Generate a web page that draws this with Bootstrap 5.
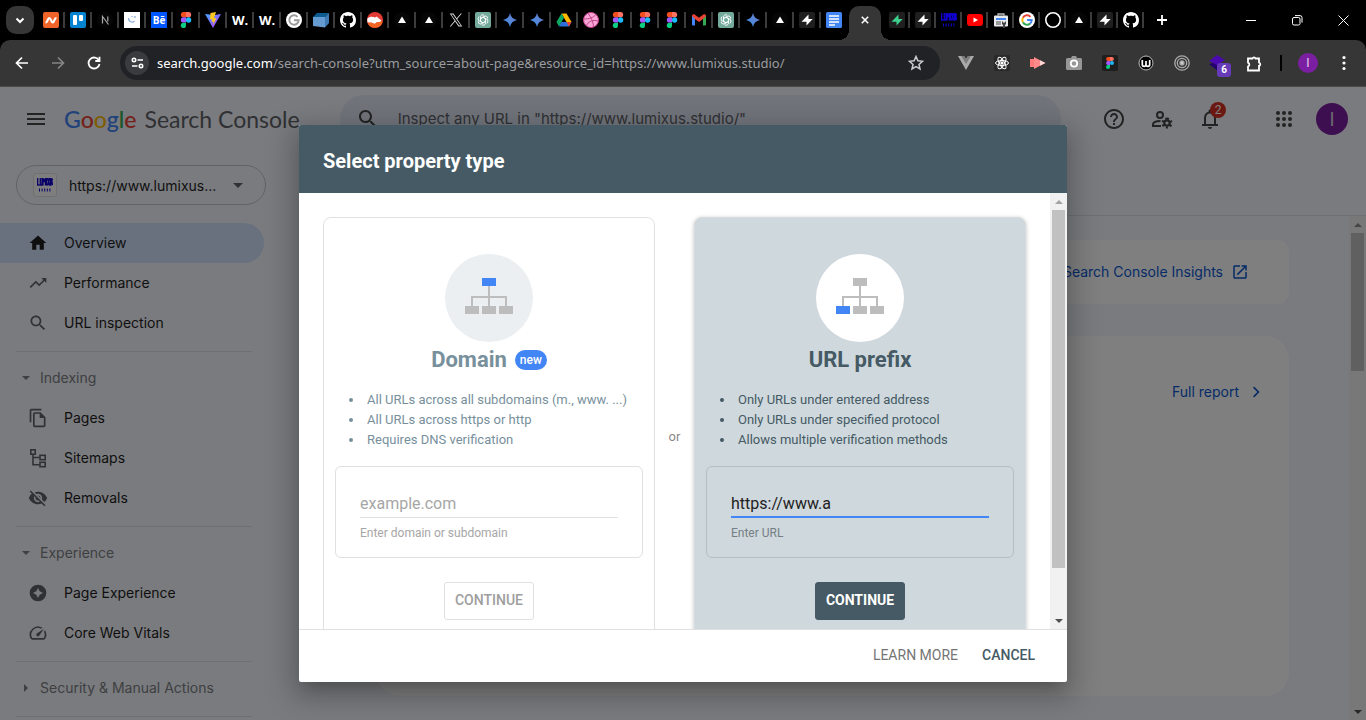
<!DOCTYPE html>
<html lang="en">
<head>
<meta charset="utf-8">
<meta name="viewport" content="width=device-width, initial-scale=1">
<title>Google Search Console</title>
<link href="https://cdn.jsdelivr.net/npm/bootstrap@5.3.0/dist/css/bootstrap.min.css" rel="stylesheet">
<style>
  body { height: 100vh; overflow: hidden; background: #000; font-family: Roboto, sans-serif; font-size: 14px; }
  svg { display: block; flex: none; }
  button { font-family: inherit; }
  .plain { border: 0; background: none; padding: 0; color: inherit; display: flex; align-items: center; justify-content: center; flex: none; }

  /* tab strip */
  .tabstrip { height: 40px; padding-left: 6px; color: #fff; }
  .tab-search { width: 28px; height: 28px; border-radius: 10px; background: #363636; margin-right: 4px; }
  .tab-item { width: 27px; height: 16px; border-right: 2px solid #3c3c3c; padding: 0 4px 0 5px; justify-content: flex-start; }
  .tab-item.last-left { border-color: transparent; }
  .tabs-right .tab-item { width: 26px; padding-right: 3px; }
  .tab-current { position: relative; width: 32px; height: 34px; align-self: flex-end; border-radius: 10px 10px 0 0; background: #363636; margin: 0 3px 0 1px; padding-bottom: 6px; }
  .tab-current::before, .tab-current::after { content: ""; position: absolute; bottom: 0; width: 10px; height: 10px; }
  .tab-current::before { left: -10px; background: radial-gradient(circle at 0 0, transparent 10px, #363636 10px); }
  .tab-current::after { right: -10px; background: radial-gradient(circle at 100% 0, transparent 10px, #363636 10px); }
  .word-icon { font: 700 13px/16px "Open Sans", sans-serif; width: 16px; }
  .be-icon { font: 700 10px/16px "Open Sans", sans-serif; width: 16px; height: 16px; background: #0057ff; text-align: center; }
  .win-btn { width: 46px; height: 40px; }

  /* toolbar */
  .toolbar { height: 47px; background: #363636; border-radius: 10px 10px 0 0; border-bottom: 1px solid #4a4a4a; color: #fff; padding-left: 4px; padding-right: 4px; }
  .tool-btn { width: 36px; height: 34px; }
  .omnibox { height: 34px; border-radius: 17px; background: #202226; margin-left: 8px; margin-right: 8px; padding: 0 16px 0 5px; min-width: 0; }
  .site-info { width: 24px; height: 24px; border-radius: 50%; background: #3a3b3e; }
  .address { font: 13px/20px "Noto Sans", sans-serif; color: #9b9c9e; margin-left: 8px; }
  .address b { font-weight: 400; color: #fff; }
  .ext { width: 36px; height: 34px; position: relative; }
  .ext-count { position: absolute; left: 17px; top: 17px; width: 14px; height: 14px; border-radius: 3px; background: #673ab7; font: 700 10px/14px Roboto, sans-serif; }
  .tool-line { width: 2px; height: 16px; background: #000; margin: 0 8px; }
  .avatar-s { width: 20px; height: 20px; border-radius: 50%; background: #7b1fa2; color: #e8d2f0; font-size: 12px; }

  /* search console page */
  .app { background: #f4f6fc; font-family: Inter, sans-serif; color: #1f1f1f; }
  .appbar { height: 64px; padding: 0 18px 0 24px; color: #444746; }
  .logo-g { font: 500 23px/32px Lato, sans-serif; }
  .logo-g .product { font-weight: 400; color: #5f6368; margin-left: 8px; }
  .inspect { width: 721px; height: 48px; border-radius: 24px; background: #e3e9f7; margin-left: 40px; padding-left: 16px; }
  .inspect input { background: none; border: 0; box-shadow: none; outline: 0; font-size: 15px; padding: 0; margin-left: 18px; flex: 1; }
  .inspect input::placeholder { color: #5f6368; }
  .appbar .plain { width: 48px; height: 48px; position: relative; }
  .appbar .apps { margin-left: 26px; }
  .alert-count { position: absolute; left: 24px; top: 7px; width: 16px; height: 16px; border-radius: 50%; background: #d93025; color: #fff; font: 12px/16px Roboto, sans-serif; }
  .avatar-l { width: 32px; height: 32px; border-radius: 50%; background: #7b1fa2; color: #d8d8d8; font: 20px/32px "Open Sans", sans-serif; }

  .sidebar { width: 304px; flex: none; }
  .property { width: 250px; height: 40px; border: 1px solid #c4c7c5; border-radius: 20px; margin: 14px 0 18px 16px; padding: 0 22px 0 16px; justify-content: flex-start; font-size: 14px; }
  .prop-icon { width: 24px; height: 24px; border: 1px solid #e0e0e0; border-radius: 3px; background: #fcfcff; margin-right: 12px; }
  .side-link { height: 40px; width: 264px; padding-left: 28px; gap: 16px; color: #1f1f1f; display: flex; align-items: center; border-radius: 0 20px 20px 0; text-decoration: none; line-height: 20px; }
  .side-link svg { fill: #5f6368; }
  .side-link.active { background: #d3e3fd; }
  .side-link.active svg { fill: #1f1f1f; }
  .side-line { width: 236px; height: 1px; margin: 8px 0 6px 16px; background: #dcdfdf; }
  .side-head { height: 40px; padding-left: 22px; gap: 10px; color: #7c8085; justify-content: flex-start; line-height: 20px; }
  .pane { margin-top: 64px; border-top: 1px solid #dfe1e5; overflow: hidden; min-width: 0; }
  .panel { background: #fff; margin-left: 72px; margin-right: 60px; color: #0b57d0; font-weight: 500; }
  .panel a { color: #0b57d0; text-decoration: none; display: flex; align-items: center; justify-content: flex-end; line-height: 20px; }
  .insights { height: 64px; margin-top: 24px; border-radius: 12px; padding-right: 40px; font-weight: 400; }
  .report { height: 360px; margin-top: 32px; border-radius: 24px; padding: 46px 22px 0 0; font-weight: 400; }

  /* drawn scroll bars */
  .bar { width: 17px; flex: none; background: #f1f1f1; display: flex; flex-direction: column; align-items: center; justify-content: space-between; }
  .bar-thumb { width: 13px; background: #c1c1c1; }
  .bar-arrow { height: 17px; display: flex; align-items: center; }

  /* dialog */
  .dim { background: rgba(0,0,0,.5); font-family: Roboto, sans-serif; }
  .dialog { width: 768px; height: calc(100% - 76px); border: 0; border-radius: 2px; background: #fff; box-shadow: 0 11px 15px -7px rgba(0,0,0,.2), 0 9px 28px 8px rgba(0,0,0,.22); overflow: hidden; }
  .dialog-top { height: 68px; background: #455a64; color: #fff; padding: 4px 24px 0; font-size: 20px; line-height: 24px; font-weight: 700; flex: none; }
  .dialog-top h1 { font: inherit; margin: 0; }
  .choices { display: grid; grid-template-columns: 1fr 39px 1fr; padding: 24px 24px 0; overflow: hidden; min-height: 0; }
  .choice { height: 440px; border: 1px solid #e0e0e0; border-radius: 8px; padding: 36px 11px 0; color: #78909c; display: flex; flex-direction: column; align-items: center; background: #fff; }
  .choice.on { border-color: #d6dcdf; background: #cfd8dd; color: #455a64; box-shadow: 0 1px 4px rgba(0,0,0,.25); }
  .disc { width: 88px; height: 88px; border-radius: 50%; background: #eceff1; }
  .on .disc { background: #fff; }
  .choice h2 { font-size: 22px; line-height: 36px; font-weight: 700; margin: 0; }
  .new-pill { background: #4285f4; font-size: 12px; line-height: 20px; height: 20px; border-radius: 10px; padding: 0 5px; font-weight: 500; }
  .choice ul { align-self: stretch; margin: 12px 0 16px; padding-left: 29px; font-size: 13px; line-height: 20px; }
  .choice li { padding-left: 3px; }
  .entry { align-self: stretch; height: 92px; border: 1px solid #e0e0e0; border-radius: 6px; padding: 23px 24px 0; }
  .on .entry { border-color: #b5bfc2; }
  .entry input { border: 0; border-bottom: 1px solid #e0e0e0; border-radius: 0; height: 28px; padding: 0; font-size: 16px; color: #212121; background: none; box-shadow: none; }
  .entry input::placeholder { color: #a6a6a6; }
  .on .entry input { border-bottom: 2px solid #4285f4; background: none; box-shadow: none; }
  .entry label { font-size: 12px; line-height: 16px; margin-top: 7px; color: #a6a6a6; display: block; }
  .on .entry label { color: #757f84; }
  .go { width: 90px; height: 38px; padding: 0 0 2px; margin-top: 24px; border-radius: 3px; font-size: 14px; font-weight: 500; border: 1px solid #e0e0e0; color: #9e9e9e; background: #fff; }
  .on .go { background: #455a64; border-color: #455a64; color: #fff; font-weight: 700; }
  .or-word { font-size: 13px; color: #8a8a8a; padding-top: 210px; text-align: center; }
  .dialog-end { height: 53px; border-top: 1px solid #e0e0e0; padding: 0 32px 2px 0; gap: 24px; flex: none; }
  .dialog-end .btn { padding: 0; border: 0; font-size: 14px; line-height: 20px; color: #757575; }
  .dialog-end .btn.strong { color: #455a64; font-weight: 500; }
</style>
</head>
<body class="d-flex flex-column">

<svg width="0" height="0" class="position-absolute" aria-hidden="true">
  <defs>
    <linearGradient id="gem" x1="0" y1="1" x2="1" y2="0"><stop offset="0" stop-color="#2a8fe8"/><stop offset=".5" stop-color="#5a86d8"/><stop offset="1" stop-color="#5a78c8"/></linearGradient>
    <linearGradient id="vg" x1="0" y1="0" x2="1" y2="1"><stop offset="0" stop-color="#41a9ff"/><stop offset="1" stop-color="#bd34fe"/></linearGradient>
    <symbol id="figma" viewBox="0 0 16 16"><path fill="#f24e1e" d="M8 0H5.500a2.650 2.650 0 0 0 0 5.300H8z"/><path fill="#ff7262" d="M8 0h2.500a2.650 2.650 0 0 1 0 5.300H8z"/><path fill="#a259ff" d="M8 5.300H5.500a2.650 2.650 0 0 0 0 5.300H8z"/><circle cx="10.600" cy="8" r="2.650" fill="#1abcfe"/><path fill="#0acf83" d="M8 10.700H5.500A2.650 2.650 0 1 0 8 13.400z"/></symbol>
    <symbol id="tri" viewBox="0 0 16 16"><circle cx="8" cy="8" r="8" fill="#060606"/><path fill="#fff" d="M8 4.500l4 6.500H4z"/></symbol>
    <symbol id="gpt" viewBox="0 0 16 16"><rect width="16" height="16" rx="2" fill="#74aa9c"/><g fill="none" stroke="#fff" stroke-width=".9"><path d="M8 5.300l2.500 1.400v4.500a2.300 2.300 0 0 1-3.600 1.600"/><path d="M8 5.300l2.500 1.400v4.500a2.300 2.300 0 0 1-3.600 1.600" transform="rotate(60 8 8)"/><path d="M8 5.300l2.500 1.400v4.500a2.300 2.300 0 0 1-3.600 1.600" transform="rotate(120 8 8)"/><path d="M8 5.300l2.500 1.400v4.500a2.300 2.300 0 0 1-3.600 1.600" transform="rotate(180 8 8)"/><path d="M8 5.300l2.500 1.400v4.500a2.300 2.300 0 0 1-3.600 1.600" transform="rotate(240 8 8)"/><path d="M8 5.300l2.500 1.400v4.500a2.300 2.300 0 0 1-3.600 1.600" transform="rotate(300 8 8)"/></g></symbol>
    <symbol id="spark" viewBox="0 0 16 16"><path fill="url(#gem)" d="M8 1C8.900 5 11 7.100 15 8 11 8.900 8.900 11 8 15 7.100 11 5 8.900 1 8 5 7.100 7.100 5 8 1z"/></symbol>
    <symbol id="bolt" viewBox="0 0 16 16"><rect width="16" height="16" rx="2" fill="#1f1f1f"/><path fill="currentColor" d="M9.500 2.500v4.500h4.200L7.500 13.500V9.800H2.500z"/></symbol>
    <symbol id="git" viewBox="0 0 16 16"><path fill="#fff" d="M8 0C3.580 0 0 3.580 0 8c0 3.540 2.290 6.530 5.470 7.590.4.070.55-.17.55-.38 0-.19-.01-.82-.01-1.490-2.010.37-2.530-.49-2.690-.94-.09-.23-.48-.94-.82-1.130-.28-.15-.68-.52-.01-.53.63-.01 1.080.58 1.230.82.72 1.210 1.870.87 2.330.66.07-.52.28-.87.51-1.070-1.780-.2-3.640-.89-3.640-3.950 0-.87.31-1.590.82-2.150-.08-.2-.36-1.020.08-2.120 0 0 .67-.21 2.200.82.64-.18 1.320-.27 2-.27s1.360.09 2 .27c1.530-1.040 2.200-.82 2.200-.82.44 1.100.16 1.920.08 2.120.51.56.82 1.270.82 2.150 0 3.070-1.870 3.750-3.650 3.950.29.25.54.73.54 1.480 0 1.070-.01 1.930-.01 2.200 0 .21.15.46.55.38A8.010 8.010 0 0 0 16 8c0-4.420-3.580-8-8-8z"/></symbol>
    <symbol id="lumi" viewBox="0 0 16 16"><g fill="none" stroke="#1000d0" stroke-width="1.300"><path d="M.7 1v7H2.500M3.300 1v7H5V1M6 8.500V1.200L7.200 4 8.400 1.200V8.500M9.500 1v7.500M10.500 1l2 7.500M12.500 1l-2 7.500M13.300 1v7H14V1M15.500 1.500L14.800 4l.8 4"/><path stroke-width="3" stroke-dasharray="1 1.600" d="M2 13h13"/></g></symbol>
    <symbol id="mag" viewBox="0 0 24 24"><path d="M15.500 14h-.79l-.28-.27C15.410 12.590 16 11.110 16 9.500 16 5.910 13.090 3 9.500 3S3 5.910 3 9.500 5.910 16 9.500 16c1.610 0 3.090-.59 4.230-1.570l.27.28v.79l5 4.990L20.490 19l-4.990-5zm-6 0C7.010 14 5 11.990 5 9.500S7.010 5 9.500 5 14 7.010 14 9.500 11.990 14 9.500 14z"/></symbol>
  </defs>
</svg>

<header class="tabstrip d-flex align-items-center flex-shrink-0">
  <button class="plain tab-search" aria-label="Search tabs"><svg width="10" height="10" fill="none" stroke="#fff" stroke-width="2"><path d="M1.500 3.500L5 7l3.500-3.500"/></svg></button>
  <button class="plain tab-item" aria-label="Namecheap"><svg width="16" height="16"><rect width="16" height="16" rx="2" fill="#f0642a"/><path d="M2.500 10.500C5 10.500 4.500 6 6.200 6s2 4.500 3.600 4.500 1.200-4.500 3.700-4.500" fill="none" stroke="#fff" stroke-width="2.200"/></svg></button>
  <button class="plain tab-item" aria-label="Trello"><svg width="16" height="16"><rect width="16" height="16" rx="2" fill="#0284d0"/><rect x="3" y="3" width="4" height="10" rx="1" fill="#fff"/><rect x="9" y="3" width="4" height="6" rx="1" fill="#fff"/></svg></button>
  <button class="plain tab-item" aria-label="Next.js"><svg width="16" height="16" fill="none" stroke="#aaa" stroke-width="1.200"><circle cx="8" cy="8" r="8" fill="#060606" stroke="none"/><path d="M5.500 11.500V4.500l6 8M10.800 4.500v5"/></svg></button>
  <button class="plain tab-item" aria-label="Design"><svg width="16" height="16"><path fill="#fff" d="M0 0h16v16H0z"/><path d="M4.500 6c0 4 4 5 6 3M8 4v1M11 4v2" fill="none" stroke="#8fb2dd" stroke-width="1.300"/></svg></button>
  <button class="plain tab-item" aria-label="Behance"><span class="be-icon">Bē</span></button>
  <button class="plain tab-item" aria-label="Figma"><svg width="16" height="16"><use href="#figma"/></svg></button>
  <button class="plain tab-item" aria-label="Vite"><svg width="16" height="16"><path fill="url(#vg)" d="M0 2l8 14 8-14-6 1z"/><path fill="#ffc81e" d="M11 0L5.500 1 5 7.500l2.200-.4L6.500 10l2-.5-.5 3.500L11.500 6 9 6.300z"/></svg></button>
  <button class="plain tab-item"><span class="word-icon">W.</span></button>
  <button class="plain tab-item"><span class="word-icon">W.</span></button>
  <button class="plain tab-item" aria-label="G"><svg width="16" height="16"><circle cx="8" cy="8" r="8" fill="#fff"/><path d="M11.500 4.800A4.700 4.700 0 1 0 12.700 8.300H8" fill="none" stroke="#999" stroke-width="1.900"/></svg></button>
  <button class="plain tab-item" aria-label="Box"><svg width="16" height="16"><path fill="#0d5b93" d="M4 1h12l-4 4H0z"/><path fill="#659bd0" d="M0 5h12v10.500L0 14z"/><path fill="#3f7ab5" d="M12 5l4-4v10l-4 4.500z"/></svg></button>
  <button class="plain tab-item" aria-label="GitHub"><svg width="16" height="16"><use href="#git"/></svg></button>
  <button class="plain tab-item" aria-label="Bear"><svg width="16" height="16"><circle cx="8" cy="8" r="8" fill="#e33b35"/><path fill="#fff" d="M.3 6.800C3 4 6 4.500 8 5.500l2-1 1 1.300 3.500 2.700-.8 1.300-3.700.4L7.500 12 5 10.800.4 10.500z"/><path fill="#f26522" d="M.4 10.500L5 10.800l2.500 1.200 2.500-1.800 3.700-.4 2-.3A8 8 0 0 1 .4 10.500z"/></svg></button>
  <button class="plain tab-item" aria-label="Vercel"><svg width="16" height="16"><use href="#tri"/></svg></button>
  <button class="plain tab-item" aria-label="Vercel"><svg width="16" height="16"><use href="#tri"/></svg></button>
  <button class="plain tab-item" aria-label="X"><svg width="16" height="16" viewBox="-3 -3 30 30" fill="#ddd"><path d="M14.230 10.160L22.980 0h-2.070l-7.600 8.820L7.240 0H.24l9.170 13.340L.24 24h2.080l8.010-9.320L16.730 24h7zm-2.840 3.300l-.93-1.330L3.070 1.560h3.180l5.970 8.530.92 1.330 7.760 11.090h-3.180z"/></svg></button>
  <button class="plain tab-item" aria-label="ChatGPT"><svg width="16" height="16"><use href="#gpt"/></svg></button>
  <button class="plain tab-item" aria-label="Gemini"><svg width="16" height="16"><use href="#spark"/></svg></button>
  <button class="plain tab-item" aria-label="Gemini"><svg width="16" height="16"><use href="#spark"/></svg></button>
  <button class="plain tab-item" aria-label="Drive"><svg width="16" height="16"><path fill="#ffba00" d="M5.500 1.500h5L15.500 10h-5z"/><path fill="#0da960" d="M5.500 1.500L8 5.800 3 14.500.5 10z"/><path fill="#2d6fdd" d="M5.500 10h10L13 14.500H3z"/><path fill="#ea4335" d="M10.500 10h5L13 14.500z"/></svg></button>
  <button class="plain tab-item" aria-label="Dribbble"><svg width="16" height="16" fill="none" stroke="#c2418a" stroke-width="1"><circle cx="8" cy="8" r="7.500" fill="#f8a5d6"/><path d="M5 1.500C8 5 10 9 10.700 15M1 7c5 0 9-1 12-4.500M3.500 13.500C5.500 9 10 7.500 15.300 9"/></svg></button>
  <button class="plain tab-item" aria-label="Figma"><svg width="16" height="16"><use href="#figma"/></svg></button>
  <button class="plain tab-item" aria-label="Figma"><svg width="16" height="16"><use href="#figma"/></svg></button>
  <button class="plain tab-item" aria-label="Figma"><svg width="16" height="16"><use href="#figma"/></svg></button>
  <button class="plain tab-item" aria-label="Gmail"><svg width="16" height="16"><path fill="#4285f4" d="M1 4h3v9.500H2a1 1 0 0 1-1-1z"/><path fill="#34a853" d="M12 4h3v8.500a1 1 0 0 1-1 1h-2z"/><path fill="#ea4335" d="M1 4c0-1.500 1.800-2.200 3-1.200l4 3 4-3c1.200-1 3-.3 3 1.200L12 7 8 10 4 7z"/></svg></button>
  <button class="plain tab-item" aria-label="ChatGPT"><svg width="16" height="16"><use href="#gpt"/></svg></button>
  <button class="plain tab-item" aria-label="Gemini"><svg width="16" height="16"><use href="#spark"/></svg></button>
  <button class="plain tab-item" aria-label="Vercel"><svg width="16" height="16"><use href="#tri"/></svg></button>
  <button class="plain tab-item" aria-label="Bolt"><svg width="16" height="16"><use href="#bolt"/></svg></button>
  <button class="plain tab-item last-left" aria-label="Docs"><svg width="16" height="16"><rect width="16" height="16" rx="1.500" fill="#4285f4"/><path d="M3 4h10M3 7h10M3 10h10M3 13h6" stroke="#fff" stroke-width="1.500"/></svg></button>
  <button class="plain tab-current" aria-label="Close tab"><svg width="8" height="8" stroke="#fff" stroke-width="1.600"><path d="M.8.8l6.400 6.400M7.200.8L.8 7.200"/></svg></button>
  <div class="tabs-right d-flex">
    <button class="plain tab-item" aria-label="Supabase" style="color:#3ecf8e"><svg width="16" height="16"><use href="#bolt"/></svg></button>
    <button class="plain tab-item" aria-label="Bolt"><svg width="16" height="16"><use href="#bolt"/></svg></button>
    <button class="plain tab-item" aria-label="Lumixus"><svg width="16" height="16"><use href="#lumi"/></svg></button>
    <button class="plain tab-item" aria-label="YouTube"><svg width="16" height="16"><rect y="2" width="16" height="12" rx="3" fill="#f00"/><path fill="#fff" d="M6.500 5.500L11 8l-4.500 2.500z"/></svg></button>
    <button class="plain tab-item" aria-label="Search Console"><svg width="16" height="16"><path d="M5 3.500V2h6v1.500" fill="none" stroke="#bbb" stroke-width="1.300"/><rect x="1" y="3.500" width="14" height="11" rx="1" fill="#e8eaed"/><path fill="#4285f4" d="M3 6h10v2H3z"/><path fill="#999" d="M3 9h5v4H3z"/><path fill="#444" d="M9 9l2 2 2-2v3l-1 1v3h-2v-3l-1-1z"/></svg></button>
    <button class="plain tab-item" aria-label="Google"><svg width="16" height="16" fill="none" stroke-width="2"><circle cx="8" cy="8" r="8" fill="#fff"/><path stroke="#ea4335" d="M3.900 5.700A4.700 4.700 0 0 1 11.500 4.800"/><path stroke="#fbbc05" d="M3.900 5.700A4.700 4.700 0 0 0 3.900 10.300"/><path stroke="#34a853" d="M3.900 10.300A4.700 4.700 0 0 0 11.200 11.500"/><path stroke="#4285f4" d="M11.200 11.500A4.700 4.700 0 0 0 12.700 8H8"/></svg></button>
    <button class="plain tab-item" aria-label="Circle"><svg width="16" height="16"><circle cx="8" cy="8" r="7.200" fill="none" stroke="#fff" stroke-width="1.600"/></svg></button>
    <button class="plain tab-item" aria-label="Vercel"><svg width="16" height="16"><use href="#tri"/></svg></button>
    <button class="plain tab-item" aria-label="Bolt"><svg width="16" height="16"><use href="#bolt"/></svg></button>
    <button class="plain tab-item" aria-label="GitHub"><svg width="16" height="16"><use href="#git"/></svg></button>
  </div>
  <button class="plain ms-2 ps-1" aria-label="New tab"><svg width="12" height="12" stroke="#fff" stroke-width="1.800"><path d="M6 1v10M1 6h10"/></svg></button>
  <div class="d-flex ms-auto">
    <button class="plain win-btn" aria-label="Minimise"><svg width="10" height="10" stroke="#fff"><path d="M0 5.500h10"/></svg></button>
    <button class="plain win-btn" aria-label="Restore"><svg width="11" height="11" fill="none" stroke="#fff"><rect x=".5" y="2.500" width="7.500" height="7.500" rx="1.500"/><path d="M3 .6h5A2 2 0 0 1 10 2.600v5"/></svg></button>
    <button class="plain win-btn" aria-label="Close"><svg width="11" height="11" stroke="#fff"><path d="M.5.5l10 10M10.500.5l-10 10"/></svg></button>
  </div>
</header>

<div class="toolbar d-flex align-items-center flex-shrink-0">
  <button class="plain tool-btn" aria-label="Back"><svg width="14" height="14" fill="none" stroke="#fff" stroke-width="1.700"><path d="M13 7H1.500M7 1.500L1.500 7 7 12.500"/></svg></button>
  <button class="plain tool-btn" aria-label="Forward"><svg width="14" height="14" fill="none" stroke="#858585" stroke-width="1.700"><path d="M1 7h11.500M7 1.500L12.500 7 7 12.500"/></svg></button>
  <button class="plain tool-btn" aria-label="Reload"><svg width="14" height="14" fill="none" stroke="#fff" stroke-width="1.800"><path d="M12 4.500A5.500 5.500 0 1 0 12.500 8"/><path d="M12.500.8V5H8.300"/></svg></button>
  <div class="omnibox d-flex align-items-center flex-grow-1">
    <button class="plain site-info" aria-label="Site information"><svg width="13" height="12" fill="none" stroke="#fff" stroke-width="1.600"><circle cx="3" cy="3" r="1.700"/><path d="M6.500 3H12M1 9h5.500"/><circle cx="10" cy="9" r="1.700"/></svg></button>
    <div class="address text-truncate flex-grow-1"><b>search.google.com</b>/search-console?utm_source=about-page&amp;resource_id=https://www.lumixus.studio/</div>
    <button class="plain" aria-label="Bookmark"><svg width="16" height="16" fill="none" stroke="#ccc" stroke-width="1.500"><path d="M8 1.500l1.900 4.300 4.600.5-3.500 3.100 1 4.600L8 11.600 4 14l1-4.600L1.500 6.300l4.600-.5z"/></svg></button>
  </div>
  <button class="plain ext" aria-label="Vue"><svg width="16" height="14"><path fill="#aaa" d="M0 0h6l2 3 2-3h6L8 14z"/><path fill="#7d7d7d" d="M3.200 0H6l2 3 2-3h2.800L8 8z"/></svg></button>
  <button class="plain ext" aria-label="React"><svg width="16" height="16" fill="none" stroke="#fff" stroke-width="1"><rect width="16" height="16" rx="2" fill="#292929" stroke="none"/><circle cx="8" cy="8" r="1.200" fill="#fff"/><ellipse cx="8" cy="8" rx="6.500" ry="2.500"/><ellipse cx="8" cy="8" rx="6.500" ry="2.500" transform="rotate(60 8 8)"/><ellipse cx="8" cy="8" rx="6.500" ry="2.500" transform="rotate(120 8 8)"/></svg></button>
  <button class="plain ext" aria-label="Recorder"><svg width="16" height="14"><path fill="#ff7b7b" d="M0 3h5v8H0z"/><path fill="#ff8a8a" d="M4 1l11 6L4 13z"/><path fill="#ffd5d5" d="M10 4.300L15.500 7 10 9.700z"/></svg></button>
  <button class="plain ext" aria-label="Screenshot"><svg width="16" height="14"><path fill="#979797" d="M5 2l1-2h4l1 2h3.500A1.500 1.500 0 0 1 16 3.500v9a1.500 1.500 0 0 1-1.500 1.500h-13A1.500 1.500 0 0 1 0 12.500v-9A1.500 1.500 0 0 1 1.500 2z"/><circle cx="8" cy="7.500" r="3.200" fill="none" stroke="#fff" stroke-width="1.800"/></svg></button>
  <button class="plain ext" aria-label="Figma"><svg width="16" height="16"><rect width="16" height="16" rx="2" fill="#1e1e1e"/><use href="#figma" x="2" y="2" width="12" height="12"/></svg></button>
  <button class="plain ext" aria-label="Wappalyzer"><svg width="16" height="16" fill="none" stroke="#fff"><circle cx="8" cy="8" r="7" fill="#000" stroke="#bbb"/><path stroke-width="1.700" d="M4.300 5v4.500a1.800 1.800 0 0 0 3.700 0V6v3.500a1.800 1.800 0 0 0 3.700 0V5"/></svg></button>
  <button class="plain ext" aria-label="Rings"><svg width="16" height="16" fill="none" stroke="#aaa" stroke-width="1.300"><circle cx="8" cy="8" r="7.200"/><circle cx="8" cy="8" r="4.700"/><circle cx="8" cy="8" r="2" fill="#ccc"/></svg></button>
  <button class="plain ext" aria-label="Layers, 6"><svg width="18" height="16"><path fill="#24006e" d="M0 9l9-2 8 3-8 6z"/><path fill="#4a0ab0" d="M8 0l8 5-8 5-8-4z"/></svg><span class="ext-count">6</span></button>
  <button class="plain ext" aria-label="Extensions"><svg width="17" height="17" fill="none" stroke="#fff" stroke-width="1.800"><path d="M2 3.500h4.500a1.600 1.600 0 0 1 3 0H13v4a1.700 1.700 0 0 1 0 3.300v4.700H2v-4a2 2 0 0 0 0-3.800z"/></svg></button>
  <div class="tool-line"></div>
  <button class="plain ext" aria-label="Profile"><span class="avatar-s d-flex align-items-center justify-content-center">I</span></button>
  <button class="plain ext" aria-label="Menu"><svg width="4" height="16" fill="#fff"><circle cx="2" cy="2.500" r="1.600"/><circle cx="2" cy="8" r="1.600"/><circle cx="2" cy="13.500" r="1.600"/></svg></button>
</div>

<div class="app position-relative flex-grow-1 d-flex flex-column overflow-hidden">
  <nav class="appbar d-flex align-items-center flex-shrink-0">
    <button class="plain" style="width:24px" aria-label="Main menu"><svg width="24" height="24" fill="#444746"><path d="M3 18h18v-2H3v2zm0-5h18v-2H3v2zm0-7v2h18V6H3z"/></svg></button>
    <a href="#" class="logo-g text-decoration-none text-nowrap ms-3"><span style="color:#4285f4">G</span><span style="color:#ea4335">o</span><span style="color:#fbbc05">o</span><span style="color:#4285f4">g</span><span style="color:#34a853">l</span><span style="color:#ea4335">e</span><span class="product">Search Console</span></a>
    <label class="inspect d-flex align-items-center"><svg width="24" height="24" fill="#444746"><use href="#mag"/></svg><input type="text" placeholder="Inspect any URL in &quot;https://www.lumixus.studio/&quot;"></label>
    <div class="d-flex ms-auto">
      <button class="plain" aria-label="Help"><svg width="24" height="24" fill="#444746"><path d="M11 18h2v-2h-2v2zm1-16C6.480 2 2 6.480 2 12s4.480 10 10 10 10-4.480 10-10S17.520 2 12 2zm0 18c-4.410 0-8-3.590-8-8s3.590-8 8-8 8 3.590 8 8-3.590 8-8 8zm0-14c-2.210 0-4 1.790-4 4h2c0-1.100.9-2 2-2s2 .9 2 2c0 2-3 1.750-3 5h2c0-2.250 3-2.500 3-5 0-2.210-1.790-4-4-4z"/></svg></button>
      <button class="plain" aria-label="Users"><svg width="24" height="24" fill="none" stroke="#444746" stroke-width="2"><circle cx="10" cy="8" r="3"/><path d="M11 19H3v-1.500C3 15.500 6 14 10.500 14"/><circle cx="17" cy="16" r="2.700" stroke-width="2.200"/><path stroke-width="2.200" stroke-dasharray="2 2.190" d="M17 11.600a4 4 0 0 1 0 8.800a4 4 0 0 1 0-8.800"/></svg></button>
      <button class="plain" aria-label="Notifications, 2"><svg width="24" height="24" fill="#444746"><path d="M12 22c1.100 0 2-.9 2-2h-4c0 1.100.9 2 2 2zm6-5v-6c0-3.070-1.630-5.640-4.500-6.320V4c0-.83-.67-1.500-1.500-1.500s-1.500.67-1.500 1.500v.68C7.640 5.360 6 7.920 6 11v6H4v2h16v-2h-2zm-2 0H8v-6c0-2.480 1.510-4.500 4-4.500s4 2.020 4 4.500v6z"/></svg><span class="alert-count">2</span></button>
      <button class="plain apps" aria-label="Google apps"><svg width="24" height="24" fill="#444746"><circle cx="6" cy="6" r="2"/><circle cx="12" cy="6" r="2"/><circle cx="18" cy="6" r="2"/><circle cx="6" cy="12" r="2"/><circle cx="12" cy="12" r="2"/><circle cx="18" cy="12" r="2"/><circle cx="6" cy="18" r="2"/><circle cx="12" cy="18" r="2"/><circle cx="18" cy="18" r="2"/></svg></button>
      <button class="plain" style="margin-right:-8px" aria-label="Account"><span class="avatar-l">I</span></button>
    </div>
  </nav>

  <div class="d-flex flex-grow-1" style="min-height:0">
    <aside class="sidebar">
      <button class="plain property"><span class="prop-icon d-flex align-items-center justify-content-center"><svg width="16" height="16"><use href="#lumi"/></svg></span>https://www.lumixus...<svg class="ms-auto" width="10" height="5" fill="#5f6368"><path d="M0 0h10L5 5z"/></svg></button>
      <nav>
        <a href="#" class="side-link active"><svg width="20" height="20" viewBox="0 0 24 24"><path d="M10 20v-6h4v6h5v-8h3L12 3 2 12h3v8z"/></svg>Overview</a>
        <a href="#" class="side-link"><svg width="20" height="20" viewBox="0 0 24 24"><path d="M16 6l2.290 2.290-4.880 4.880-4-4L2 16.590 3.410 18l6-6 4 4 6.300-6.290L22 12V6z"/></svg>Performance</a>
        <a href="#" class="side-link"><svg width="20" height="20"><use href="#mag"/></svg>URL inspection</a>
        <div class="side-line"></div>
        <button class="plain side-head"><svg width="8" height="4" fill="#7c8085"><path d="M0 0h8L4 4z"/></svg>Indexing</button>
        <a href="#" class="side-link"><svg width="20" height="20" viewBox="0 0 24 24"><path d="M16 1H4c-1.100 0-2 .9-2 2v14h2V3h12V1zm-1 4H8c-1.100 0-1.990.9-1.990 2L6 21c0 1.100.89 2 1.990 2H19c1.100 0 2-.9 2-2V11l-6-6zM8 21V7h6v5h5v9H8z"/></svg>Pages</a>
        <a href="#" class="side-link"><svg width="20" height="20" style="fill:none" stroke="#5f6368" stroke-width="1.600"><rect x="2.800" y="1.800" width="4.400" height="4.400"/><path d="M5 6.500v10.300h6.500M5 9.500h6.500"/><rect x="12" y="7.300" width="5.200" height="4.400"/><rect x="12" y="14.300" width="5.200" height="4.400"/></svg>Sitemaps</a>
        <a href="#" class="side-link"><svg width="20" height="20" viewBox="0 0 24 24"><path d="M12 7c2.760 0 5 2.240 5 5 0 .65-.13 1.260-.36 1.830l2.920 2.920c1.510-1.260 2.700-2.890 3.430-4.750-1.730-4.390-6-7.500-11-7.500-1.400 0-2.740.25-3.980.7l2.160 2.160C10.740 7.130 11.350 7 12 7zM2 4.270l2.280 2.280.46.46C3.080 8.300 1.780 10.020 1 12c1.730 4.390 6 7.500 11 7.500 1.550 0 3.030-.3 4.380-.84l.42.42L19.730 22 21 20.730 3.270 3 2 4.270zM7.530 9.800l1.550 1.550c-.05.21-.08.43-.08.65 0 1.660 1.340 3 3 3 .22 0 .44-.03.65-.08l1.550 1.550c-.67.33-1.410.53-2.200.53-2.760 0-5-2.240-5-5 0-.79.2-1.530.53-2.200zm4.310-.78l3.150 3.150.02-.16c0-1.660-1.340-3-3-3l-.17.01z"/></svg>Removals</a>
        <div class="side-line"></div>
        <button class="plain side-head"><svg width="8" height="4" fill="#7c8085"><path d="M0 0h8L4 4z"/></svg>Experience</button>
        <a href="#" class="side-link"><svg width="20" height="20" viewBox="0 0 24 24"><path fill-rule="evenodd" d="M12 2a10 10 0 1 0 0 20 10 10 0 0 0 0-20zm0 4l2 4 4 2-4 2-2 4-2-4-4-2 4-2z"/></svg>Page Experience</a>
        <a href="#" class="side-link"><svg width="20" height="20" viewBox="0 0 24 24"><path d="M20.380 8.570l-1.230 1.850a8 8 0 0 1-.22 7.580H5.070A8 8 0 0 1 15.580 6.850l1.850-1.230A10 10 0 0 0 3.350 19a2 2 0 0 0 1.720 1h13.850a2 2 0 0 0 1.740-1 10 10 0 0 0-.27-10.440zm-9.790 6.840a2 2 0 0 0 2.830 0l5.660-8.490-8.490 5.660a2 2 0 0 0 0 2.830z"/></svg>Core Web Vitals</a>
        <div class="side-line"></div>
        <button class="plain side-head"><svg width="8" height="8" fill="#7c8085"><path d="M2 0l4 4-4 4z"/></svg>Security &amp; Manual Actions</button>
        <div class="side-line"></div>
      </nav>
    </aside>
    <main class="pane flex-grow-1 d-flex">
      <div class="flex-grow-1 overflow-hidden">
        <section class="panel insights d-flex align-items-center justify-content-end"><a href="#">Search Console Insights<svg class="ms-2" width="18" height="18" viewBox="0 0 24 24" fill="#0b57d0"><path d="M19 19H5V5h7V3H5c-1.110 0-2 .9-2 2v14c0 1.100.89 2 2 2h14c1.100 0 2-.9 2-2v-7h-2v7zM14 3v2h3.590l-9.830 9.830 1.410 1.410L19 6.410V10h2V3h-7z"/></svg></a></section>
        <section class="panel report"><a href="#">Full report<svg class="ms-2" width="20" height="20" viewBox="0 0 24 24" fill="#0b57d0"><path d="M8.590 5.500L7.200 6.900 12.300 12l-5.100 5.100 1.390 1.400L15.100 12z"/></svg></a></section>
      </div>
      <div class="bar" aria-hidden="true">
        <div><div class="bar-arrow justify-content-center"><svg width="8" height="4" fill="#8a8a8a"><path d="M0 4h8L4 0z"/></svg></div><div class="bar-thumb" style="height:138px"></div></div>
        <div class="bar-arrow"><svg width="8" height="4" fill="#505050"><path d="M0 0h8L4 4z"/></svg></div>
      </div>
    </main>
  </div>

  <div class="modal dim position-absolute d-flex align-items-center justify-content-center overflow-hidden" role="dialog" aria-labelledby="dlg-title">
    <div class="modal-content dialog">
      <div class="dialog-top d-flex align-items-center"><h1 id="dlg-title">Select property type</h1></div>
      <div class="d-flex flex-grow-1" style="min-height:0">
        <div class="choices flex-grow-1">
          <form class="choice">
            <div class="disc d-flex align-items-center justify-content-center">
              <svg width="48" height="48"><path fill="none" stroke="#bdbdbd" stroke-width="2" d="M24 12v22M7 32v-9h34v9"/><path fill="#4285f4" d="M17 4h14v8H17z"/><path fill="#bdbdbd" d="M0 32h14v8H0zM17 32h14v8H17zM34 32h14v8H34z"/></svg>
            </div>
            <h2 class="d-flex align-items-center">Domain<span class="badge new-pill ms-2">new</span></h2>
            <ul><li>All URLs across all subdomains (m., www. ...)</li><li>All URLs across https or http</li><li>Requires DNS verification</li></ul>
            <div class="entry"><input class="form-control" id="domain" type="text" placeholder="example.com"><label for="domain">Enter domain or subdomain</label></div>
            <button type="button" class="btn go">CONTINUE</button>
          </form>
          <div class="or-word">or</div>
          <form class="choice on">
            <div class="disc d-flex align-items-center justify-content-center">
              <svg width="48" height="48"><path fill="none" stroke="#bdbdbd" stroke-width="2" d="M24 12v20M7 32v-9h34v9"/><path fill="#4285f4" d="M0 32h14v8H0z"/><path fill="#bdbdbd" d="M17 4h14v8H17zM17 32h14v8H17zM34 32h14v8H34z"/></svg>
            </div>
            <h2>URL prefix</h2>
            <ul><li>Only URLs under entered address</li><li>Only URLs under specified protocol</li><li>Allows multiple verification methods</li></ul>
            <div class="entry"><input class="form-control" id="prefix" type="text" value="https://www.a"><label for="prefix">Enter URL</label></div>
            <button type="button" class="btn go">CONTINUE</button>
          </form>
        </div>
        <div class="bar" aria-hidden="true">
          <div><div class="bar-arrow justify-content-center"><svg width="8" height="4" fill="#a3a3a3"><path d="M0 4h8L4 0z"/></svg></div><div class="bar-thumb" style="height:358px"></div></div>
          <div class="bar-arrow"><svg width="8" height="4" fill="#505050"><path d="M0 0h8L4 4z"/></svg></div>
        </div>
      </div>
      <div class="dialog-end d-flex align-items-center justify-content-end">
        <button type="button" class="btn">LEARN MORE</button>
        <button type="button" class="btn strong">CANCEL</button>
      </div>
    </div>
  </div>
</div>

<script src="https://cdn.jsdelivr.net/npm/bootstrap@5.3.0/dist/js/bootstrap.bundle.min.js"></script>
</body>
</html>
